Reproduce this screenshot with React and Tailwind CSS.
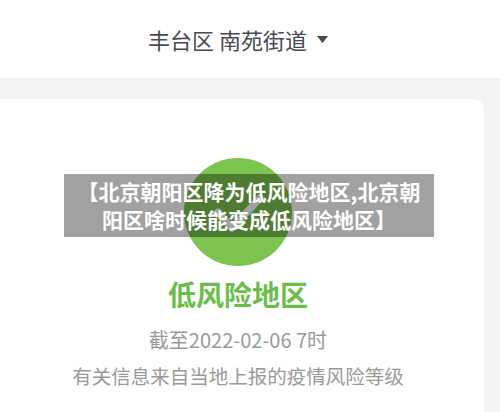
import React from "react";

export default function App() {
  return (
    <div
      className="relative w-[500px] h-[412px] overflow-hidden bg-[#f2f3f5]"
      style={{ fontFamily: '"Noto Sans CJK SC", "Noto Sans", sans-serif' }}
    >
      {/* top location bar */}
      <div className="h-[78px] bg-white flex items-center justify-center pr-[24px]">
        <span className="text-[22px] text-[#4a4a52] leading-none">丰台区 南苑街道</span>
        <svg width="11" height="7" viewBox="0 0 11 7" className="ml-[10px] mt-[1px]">
          <path d="M0 0 H11 L5.5 7 Z" fill="#4a4a52" />
        </svg>
      </div>

      {/* risk card */}
      <div className="pt-[21px] pr-[16px]">
        <div className="bg-white rounded-tr-[10px] h-[320px] pr-[8px] flex flex-col items-center">
          <div className="mt-[59px] w-[108px] h-[108px] rounded-full bg-[#7cc350] flex items-center justify-center">
            <svg width="60" height="60" viewBox="0 0 60 60">
              <path
                d="M10 30 L24 46 L52 16"
                fill="none"
                stroke="#ffffff"
                strokeWidth="7"
                strokeLinecap="round"
                strokeLinejoin="round"
              />
            </svg>
          </div>
          <div className="mt-[11px] text-[28px] font-bold text-[#6dbd4b] leading-[34px]">低风险地区</div>
          <div className="mt-[16px] text-[20px] text-[#9a9a9a] leading-[26px]">截至2022-02-06 7时</div>
          <div className="mt-[10px] text-[19.5px] text-[#9a9a9a] leading-[26px]">有关信息来自当地上报的疫情风险等级</div>
        </div>
      </div>

      {/* title watermark over the picture */}
      <div className="absolute left-[64px] top-[174px] w-[370px] h-[63px] bg-[rgba(0,0,0,0.37)] pt-[3px] text-center text-white font-bold text-[21px] leading-[28px]">
        <div>【北京朝阳区降为低风险地区,北京朝</div>
        <div>阳区啥时候能变成低风险地区】</div>
      </div>
    </div>
  );
}
